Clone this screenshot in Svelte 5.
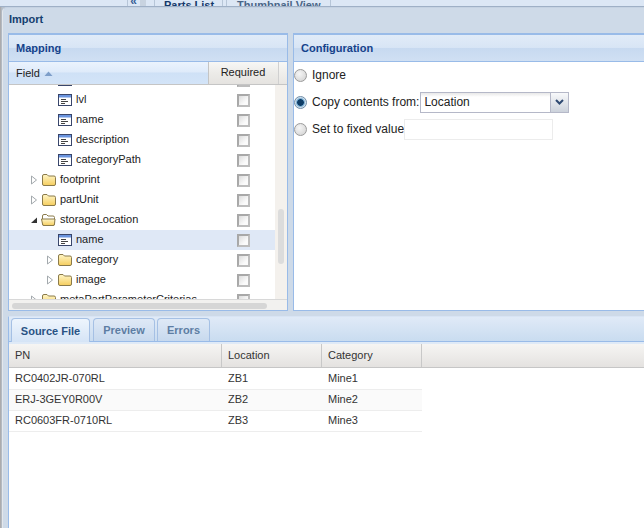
<script>
  const rows = [
    { label: 'id', kind: 'leaf', lv: 2 },
    { label: 'lvl', kind: 'leaf', lv: 2 },
    { label: 'name', kind: 'leaf', lv: 2 },
    { label: 'description', kind: 'leaf', lv: 2 },
    { label: 'categoryPath', kind: 'leaf', lv: 2 },
    { label: 'footprint', kind: 'closed', lv: 1 },
    { label: 'partUnit', kind: 'closed', lv: 1 },
    { label: 'storageLocation', kind: 'open', lv: 1 },
    { label: 'name', kind: 'leaf', lv: 2, selected: true },
    { label: 'category', kind: 'closed', lv: 2 },
    { label: 'image', kind: 'closed', lv: 2 },
    { label: 'metaPartParameterCriterias', kind: 'closed', lv: 1 }
  ];
  const columns = ['PN', 'Location', 'Category'];
  const data = [
    ['RC0402JR-070RL', 'ZB1', 'Mine1'],
    ['ERJ-3GEY0R00V', 'ZB2', 'Mine2'],
    ['RC0603FR-0710RL', 'ZB3', 'Mine3']
  ];
</script>

<div class="root">
  <div class="top">
    <span class="collapse">«</span>
    <span class="mini"></span>
    <span class="bgtab first">Parts List</span>
    <span class="bgtab second">Thumbnail View</span>
  </div>
  <div class="window">
    <div class="title">Import</div>
    <div class="upper">
      <section class="panel mapping">
        <h2>Mapping</h2>
        <div class="cols">
          <div class="col field">Field <svg width="9" height="5" viewBox="0 0 9 5"><path d="M0.5 5 L4.5 0.5 L8.5 5Z" fill="#7d9ec9" /></svg></div>
          <div class="col req">Required</div>
          <div class="col tail"></div>
        </div>
        <div class="treewrap">
          <div class="tree">
            {#each rows as r}
              <div class="row" class:sel={r.selected}>
                <div class="node" class:lv1={r.lv === 1} class:lv2={r.lv === 2}>
                  <span class="arrow">
                    {#if r.kind === 'closed'}
                      <svg width="8" height="10" viewBox="0 0 8 10"><path d="M1.5 1 L6.5 5 L1.5 9Z" fill="#fff" stroke="#a3a9ad" /></svg>
                    {:else if r.kind === 'open'}
                      <svg width="8" height="10" viewBox="0 0 8 10"><path d="M7 2.5 V8 H1Z" fill="#333" /></svg>
                    {/if}
                  </span>
                  {#if r.kind === 'leaf'}
                    <svg class="ic" width="14" height="14" viewBox="0 0 14 14">
                      <rect x="0.5" y="1.5" width="13" height="11" fill="#fff" stroke="#39466b" />
                      <rect x="1" y="2" width="12" height="2.5" fill="#6a94de" />
                      <path d="M3 6.5 H8 M3 8.5 H10 M3 10.5 H7" stroke="#444" stroke-width="1" />
                    </svg>
                  {:else if r.kind === 'closed'}
                    <svg class="ic" width="14" height="14" viewBox="0 0 14 14">
                      <defs><linearGradient id="fg" x1="0" y1="0" x2="0" y2="1"><stop offset="0" stop-color="#fff6c8" /><stop offset="1" stop-color="#f5cd5e" /></linearGradient></defs>
                      <path d="M0.5 3 Q0.5 1.5 2 1.5 H5 L6.5 3 H12 Q13.5 3 13.5 4.5 V11 Q13.5 12.5 12 12.5 H2 Q0.5 12.5 0.5 11Z" fill="url(#fg)" stroke="#8a7a4a" />
                    </svg>
                  {:else}
                    <svg class="ic open" width="15" height="14" viewBox="0 0 15 14">
                      <defs><linearGradient id="fo" x1="0" y1="0" x2="0" y2="1"><stop offset="0" stop-color="#fff6c8" /><stop offset="1" stop-color="#f5cd5e" /></linearGradient></defs>
                      <path d="M1.5 11 V3 Q1.5 1.5 3 1.5 H5.5 L7 3 H12 Q13.5 3 13.5 4.5 V11 Q13.5 12.5 12 12.5 H3 Q1.5 12.5 1.5 11Z" fill="#fff" stroke="#8a7a4a" />
                      <path d="M0.5 6 H14 L13.5 11 Q13.5 12.5 12 12.5 H3 Q1.5 12.5 1.5 11Z" fill="url(#fo)" stroke="#8a7a4a" />
                    </svg>
                  {/if}
                  <span class="label">{r.label}</span>
                </div>
                <div class="chk"><span class="box"></span></div>
              </div>
            {/each}
          </div>
          <div class="vbar"><div class="vthumb"></div></div>
        </div>
        <div class="hbar"><div class="hthumb"></div></div>
      </section>
      <section class="panel config">
        <h2>Configuration</h2>
        <div class="form">
          <div class="opt"><span class="radio"></span><span>Ignore</span></div>
          <div class="opt"><span class="radio on"></span><span>Copy contents from:</span>
            <div class="combo"><span class="value">Location</span><span class="trigger"><svg width="9" height="6" viewBox="0 0 9 6"><path d="M1 1 L4.5 4.5 L8 1" fill="none" stroke="#2f4a72" stroke-width="2" /></svg></span></div>
          </div>
          <div class="opt"><span class="radio"></span><span>Set to fixed value</span><div class="fixed"></div></div>
        </div>
      </section>
    </div>
    <section class="lower">
      <div class="tabs">
        <span class="tab active">Source File</span>
        <span class="tab preview">Preview</span>
        <span class="tab errors">Errors</span>
      </div>
      <div class="grid">
        <div class="ghead">
          {#each columns as c, i}
            <div class="gh c{i}">{c}</div>
          {/each}
        </div>
        {#each data as line, n}
          <div class="grow" class:alt={n === 1}>
            {#each line as v, i}
              <div class="gc c{i}">{v}</div>
            {/each}
          </div>
        {/each}
      </div>
    </section>
  </div>
</div>

<style>
  :global(body) { margin: 0; }
  .root {
    width: 644px; height: 528px; overflow: hidden; display: flex; flex-direction: column;
    background: linear-gradient(90deg, #a9a5a3 0, #b6c0cc 2px);
    font: 11px "Liberation Sans", Arial, sans-serif; color: #222;
  }
  .top {
    height: 6px; flex: none; display: flex; overflow: hidden; padding-left: 127px;
    background: #dce7f5; border-bottom: 1px solid #9fb0c6;
    font-weight: bold; color: #25476f; line-height: 13px; white-space: nowrap;
  }
  .collapse { width: 11px; margin-top: -5px; height: 16px; font-size: 12px; color: #3a5f95; border-left: 1px solid #b7c6d8; text-align: center; }
  .mini { width: 6px; background: #c8d3e0; margin-right: 8px; margin-left: 1px; }
  .bgtab { margin-top: -1px; height: 16px; border-left: 1px solid #b7c6d8; border-right: 1px solid #b7c6d8; flex: none; }
  .first { padding: 0 8px 0 9px; width: 50px; color: #15396a; }
  .second { margin-left: 3px; padding: 0 10px; width: 83px; color: #4a6687; }

  .window {
    flex: 1; min-height: 0; display: flex; flex-direction: column; margin-left: 2px;
    background: #cedae8; border-left: 1px solid #e3e7ec; border-top: 1px solid #c5d2e2;
    border-top-left-radius: 5px;
  }
  .title { height: 25px; flex: none; line-height: 23px; padding-left: 6px; font-weight: bold; color: #15406f; }
  .upper { height: 278px; flex: none; display: flex; gap: 5px; padding-left: 5px; }
  .panel { background: #fff; border: 1px solid #99bbe8; border-top-width: 2px; box-sizing: border-box; display: flex; flex-direction: column; }
  .mapping { width: 280px; flex: none; }
  .config { flex: 1; border-right: 0; }
  h2 {
    margin: 0; height: 27px; flex: none; box-sizing: border-box; line-height: 27px; padding-left: 7px;
    font-size: 11px; font-weight: bold; color: #15428b;
    background: linear-gradient(#e1ebf8, #d8e5f5 48%, #c7d9f0 50%, #d0e0f3);
    border-bottom: 1px solid #99bbe8;
  }
  .cols { height: 23px; flex: none; display: flex; border-bottom: 1px solid #c5c5c5; box-sizing: border-box; }
  .col { line-height: 21px; box-sizing: border-box; }
  .field { width: 199px; padding-left: 7px; background: linear-gradient(#ebf3fd, #dfebfa 45%, #cfe1f6 50%, #d3e4f8); display: flex; align-items: center; gap: 4px; }
  .req { width: 70px; text-align: center; border-left: 1px solid #c4c4c4; background: linear-gradient(#f7f7f5, #ecebe8 50%, #e5e3e0); padding-right: 1px; }
  .tail { flex: 1; border-left: 1px solid #d0d0d0; background: linear-gradient(#f7f7f5, #e8e6e3); }

  .treewrap { height: 214px; flex: none; display: flex; overflow: hidden; }
  .tree { width: 266px; flex: none; margin-top: -15px; }
  .row { height: 20px; display: flex; align-items: center; }
  .row.sel { background: #dfe8f6; }
  .node { width: 199px; flex: none; box-sizing: border-box; display: flex; align-items: center; }
  .lv1 { padding-left: 21px; }
  .lv2 { padding-left: 37px; }
  .arrow { width: 8px; height: 10px; flex: none; margin-right: 4px; display: flex; }
  .ic { flex: none; margin-right: 4px; }
  .ic.open { margin-left: -1px; }
  .label { white-space: nowrap; padding-bottom: 2px; }
  .chk { width: 71px; flex: none; display: flex; justify-content: center; }
  .box { width: 9px; height: 9px; margin-top: 1px; border: 2px solid #a8a8a8; border-right-color: #bdbdbd; border-bottom-color: #bdbdbd; background: linear-gradient(135deg, #dcdcdc, #fbfbfb 70%); }
  .vbar { flex: 1; background: #f4f1ed; padding: 124px 3px 0; box-sizing: border-box; }
  .vthumb { height: 55px; background: #dcdcdc; border-radius: 3px; }
  .hbar { flex: 1; background: #f2f1ef; padding: 3px 3px 0; border-top: 1px solid #d8d8d8; box-sizing: border-box; }
  .hthumb { width: 255px; height: 6px; background: #d6d6d6; border-radius: 3px; }

  .form { flex: 1; padding: 2px 0 0 1px; margin-left: -1px; display: flex; flex-direction: column; gap: 5px; font-size: 12px; color: #222; }
  .opt { height: 22px; display: flex; align-items: center; white-space: nowrap; }
  .radio { width: 11px; height: 11px; margin-right: 5px; border: 1px solid #9b9b9b; border-radius: 50%; background: radial-gradient(circle at 40% 35%, #f6f6f6, #cfcfcf); flex: none; }
  .radio.on { background: radial-gradient(circle, #0f3d66 0 3px, #5d9ac7 3.5px, #cfe0ec 5px); border-color: #6f8ca8; }
  .combo { width: 149px; height: 21px; margin-left: 1px; box-sizing: border-box; display: flex; border: 1px solid #b5b8c8; background: linear-gradient(#e8e8e8, #fff 4px); }
  .value { flex: 1; padding-left: 3px; line-height: 19px; }
  .trigger { width: 17px; display: flex; align-items: center; justify-content: center; border-left: 1px solid #b5b8c8; background: linear-gradient(#f8f9fb, #ccd2db); }
  .fixed { width: 149px; height: 21px; box-sizing: border-box; border: 1px solid #ececec; background: #fff; }

  .lower { flex: 1; min-height: 0; margin: 5px 0 0 5px; border-left: 1px solid #99bbe8; border-top: 1px solid #d8e4f4; background: #fff; display: flex; flex-direction: column; }
  .tabs {
    height: 25px; flex: none; box-sizing: border-box; display: flex; align-items: flex-end; padding-left: 2px; gap: 3px;
    background: linear-gradient(#e0eaf7, #c9dcf0); border-bottom: 1px solid #99bbe8; font-weight: bold;
  }
  .tab {
    height: 23px; box-sizing: border-box; line-height: 23px; text-align: center; border: 1px solid #a5c0e4; border-bottom: 0;
    border-radius: 4px 4px 0 0; color: #5d7da3; background: linear-gradient(#dfe9f6, #c7d9ee);
  }
  .tab.active { width: 79px; height: 24px; line-height: 24px; margin-bottom: -1px; color: #2a5384; background: linear-gradient(#eef5fd, #d5e4f6); }
  .preview { width: 62px; }
  .errors { width: 53px; margin-left: -1px; }

  .grid { flex: 1; min-height: 0; padding-top: 2px; background: linear-gradient(#dfeaf7 0 2px, #fff 2px); }
  .ghead { height: 24px; box-sizing: border-box; display: flex; background: linear-gradient(#f6f5f3, #e4e2e0); border-bottom: 1px solid #c6c6c6; }
  .gh { line-height: 22px; padding-left: 6px; box-sizing: border-box; border-right: 1px solid #c8c8c8; color: #333; }
  .c0 { width: 213px; }
  .c1 { width: 100px; }
  .c2 { width: 100px; }
  .grow { height: 21px; width: 413px; box-sizing: border-box; display: flex; border-bottom: 1px solid #ededed; }
  .ghead + .grow { height: 22px; }
  .grow.alt { background: #fafafa; }
  .gc { line-height: 18px; padding-left: 6px; box-sizing: border-box; color: #333; }
  .ghead + .grow .gc { line-height: 20px; }
</style>
